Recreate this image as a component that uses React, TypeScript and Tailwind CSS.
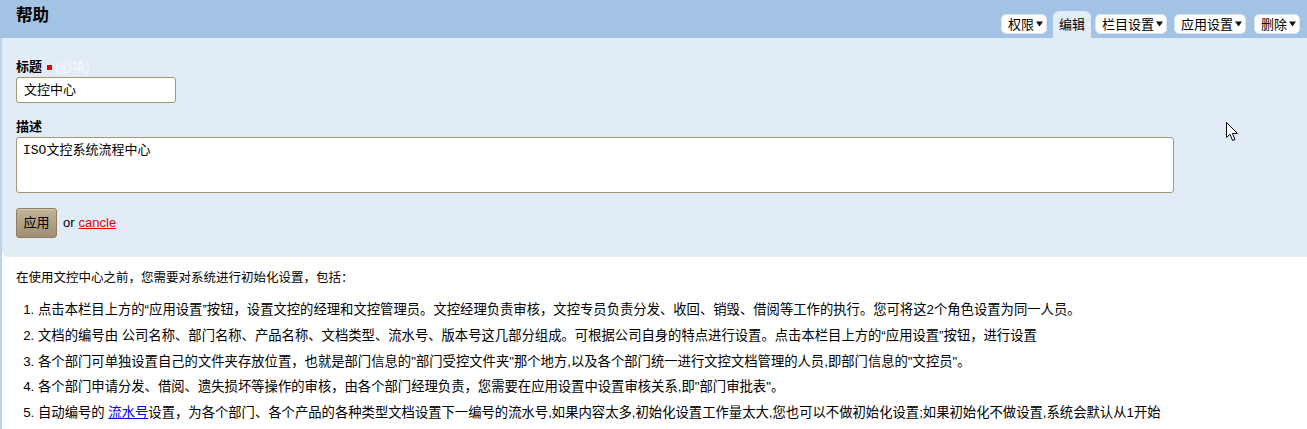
import React from "react";

const Caret = () => (
  <svg width="7" height="6" viewBox="0 0 7 6" className="ml-[2px] inline-block">
    <path d="M0 0.5 L7 0.5 L3.5 5.5 Z" fill="#111" />
  </svg>
);

const TabBtn = ({ label }: { label: string }) => (
  <div className="mb-[4px] flex h-[20px] items-center rounded-[5px] border border-[#d6e4f3] bg-white pl-[6px] pr-[3px] text-[13px] leading-none text-black">
    {label}
    <Caret />
  </div>
);

export default function App() {
  return (
    <div
      className="relative h-[429px] w-[1307px] overflow-hidden bg-white text-black"
      style={{ fontFamily: '"Liberation Sans", Arial, "Noto Sans CJK SC", sans-serif' }}
    >
      {/* header */}
      <div className="flex h-[38px] items-stretch justify-between bg-[#a3c3e5] pl-[16px] pr-[7px]">
        <h2 className="pt-[5px] text-[16.5px] font-bold leading-[20px]">帮助</h2>
        <div className="flex items-end">
          <TabBtn label="权限" />
          <div className="ml-[6px] flex h-[27px] items-center rounded-t-[6px] bg-[#e2ecf7] px-[6px] text-[13px] leading-none">
            编辑
          </div>
          <div className="ml-[4px]">
            <TabBtn label="栏目设置" />
          </div>
          <div className="ml-[7px]">
            <TabBtn label="应用设置" />
          </div>
          <div className="ml-[8px]">
            <TabBtn label="删除" />
          </div>
        </div>
      </div>

      <div className="h-[391px] border-l-2 border-[#bcd3ec]">
        {/* form panel */}
        <div className="rounded-bl-[6px] bg-[#e2ecf7] pb-[19px] pl-[14px] pr-[133px] pt-[21px]">
          <div className="flex items-center text-[13px] font-bold leading-[16px]">
            标题
            <span className="ml-[5px] inline-block h-[5px] w-[5px] bg-[#e60000]" />
            <span className="ml-[3px] font-normal text-[#f7fafd]">(必填)</span>
          </div>
          <div className="mt-[2px] flex h-[26px] w-[160px] items-center rounded-[3px] border border-[#a39575] bg-white px-[7px] text-[13px]">
            文控中心
          </div>
          <div className="mt-[16px] text-[13px] font-bold leading-[16px]">描述</div>
          <div
            className="mt-[2px] h-[56px] w-full rounded-[3px] border border-[#a39575] bg-white px-[6px] pt-[5px] text-[13px] leading-[16px]"
            style={{ fontFamily: '"Liberation Mono", "Noto Sans CJK SC", monospace' }}
          >
            ISO文控系统流程中心
          </div>
          <div className="mt-[15px] flex items-center text-[13px]">
            <div className="flex h-[30px] w-[41px] items-center justify-center rounded-[3px] border border-[#8e7e64] bg-gradient-to-b from-[#c2b499] to-[#a08f72] text-[13px] shadow-[inset_0_1px_0_rgba(255,255,255,0.25)]">
              应用
            </div>
            <span className="ml-[6px]">or</span>
            <span className="ml-[4px] text-[#e8000b] underline">cancle</span>
          </div>
        </div>

        {/* help text */}
        <div className="pl-[14px] pt-[11px]">
          <p className="text-[12.5px] leading-[20px]">在使用文控中心之前，您需要对系统进行初始化设置，包括：</p>
          <ol className="mt-[9px] list-decimal pl-[22px] text-[13.33px] leading-[25.75px]">
            <li>点击本栏目上方的“应用设置”按钮，设置文控的经理和文控管理员。文控经理负责审核，文控专员负责分发、收回、销毁、借阅等工作的执行。您可将这2个角色设置为同一人员。</li>
            <li>文档的编号由 公司名称、部门名称、产品名称、文档类型、流水号、版本号这几部分组成。可根据公司自身的特点进行设置。点击本栏目上方的“应用设置”按钮，进行设置</li>
            <li>各个部门可单独设置自己的文件夹存放位置，也就是部门信息的"部门受控文件夹"那个地方,以及各个部门统一进行文控文档管理的人员,即部门信息的"文控员"。</li>
            <li>各个部门申请分发、借阅、遗失损坏等操作的审核，由各个部门经理负责，您需要在应用设置中设置审核关系,即"部门审批表"。</li>
            <li>
              自动编号的 <span className="text-[#0000ee] underline">流水号</span>设置，为各个部门、各个产品的各种类型文档设置下一编号的流水号,如果内容太多,初始化设置工作量太大,您也可以不做初始化设置;如果初始化不做设置,系统会默认从1开始
            </li>
          </ol>
        </div>
      </div>

      {/* mouse cursor */}
      <svg className="absolute left-[1226px] top-[122px]" width="13" height="20" viewBox="0 0 13 20">
        <path d="M0.5 0.5 L0.5 15.5 L4 12.2 L6.6 18.5 L9 17.5 L6.4 11.4 L11.5 11.4 Z" fill="white" stroke="black" strokeWidth="1" strokeLinejoin="round" />
      </svg>
    </div>
  );
}
